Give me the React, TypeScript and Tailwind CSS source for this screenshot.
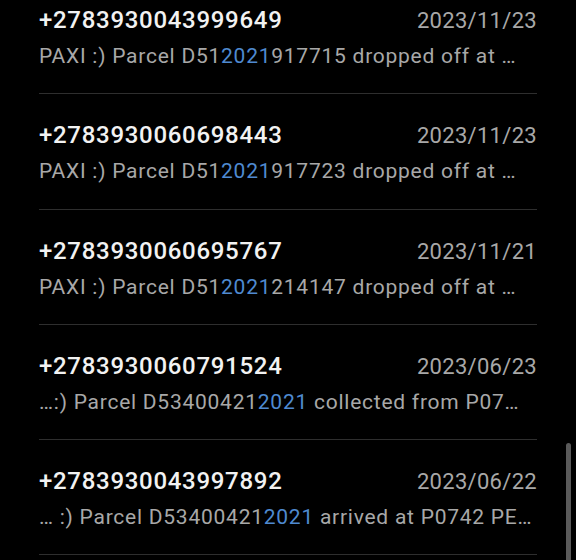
const messages = [
  {
    from: "+2783930043999649",
    date: "2023/11/23",
    pre: "PAXI :) Parcel D51",
    hit: "2021",
    post: "917715 dropped off at …",
  },
  {
    from: "+2783930060698443",
    date: "2023/11/23",
    pre: "PAXI :) Parcel D51",
    hit: "2021",
    post: "917723 dropped off at …",
  },
  {
    from: "+2783930060695767",
    date: "2023/11/21",
    pre: "PAXI :) Parcel D51",
    hit: "2021",
    post: "214147 dropped off at …",
  },
  {
    from: "+2783930060791524",
    date: "2023/06/23",
    pre: "…:) Parcel D53400421",
    hit: "2021",
    post: " collected from P07…",
  },
  {
    from: "+2783930043997892",
    date: "2023/06/22",
    pre: "… :) Parcel D53400421",
    hit: "2021",
    post: " arrived at P0742 PE…",
  },
];

export default function App() {
  return (
    <div className="relative h-[560px] w-[576px] overflow-hidden bg-black font-['Roboto','Liberation_Sans',sans-serif]">
      <ul className="-mt-[21px] px-[39px]">
        {messages.map((m) => (
          <li key={m.from} className="h-[115.3px] border-b border-[#2e2e2e] pt-[26px]">
            <div className="flex h-[30px] items-baseline justify-between leading-[30px]">
              <span className="text-[24px] font-medium tracking-[0.7px] text-[#f2f2f2]">{m.from}</span>
              <span className="text-[22px] tracking-[0.3px] text-[#a8a8a8]">{m.date}</span>
            </div>
            <p className="mt-[6px] whitespace-nowrap text-[21px] leading-[30px] tracking-[0.75px] text-[#a8a8a8]">
              {m.pre}
              <span className="text-[#4f8ad0]">{m.hit}</span>
              {m.post}
            </p>
          </li>
        ))}
      </ul>
      {/* scroll thumb */}
      <div className="absolute right-[5px] top-[443px] h-[130px] w-[5px] rounded-full bg-[#5a5a5a]" />
    </div>
  );
}
